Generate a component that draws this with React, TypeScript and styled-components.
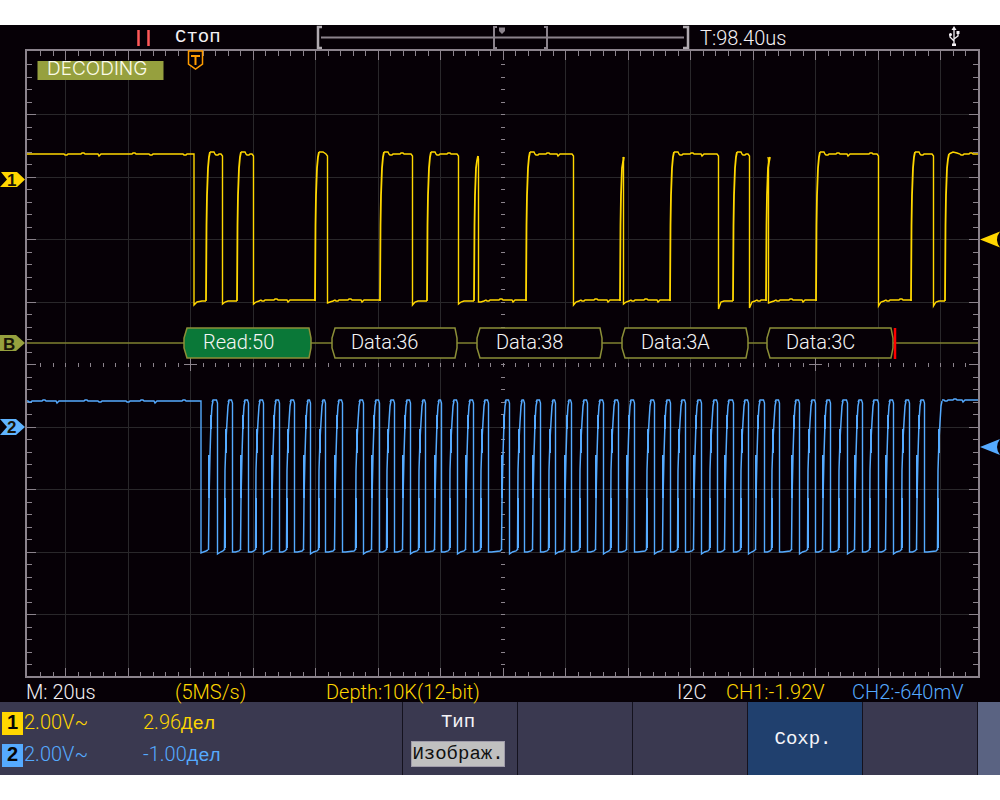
import React from "react";
import styled, { createGlobalStyle } from "styled-components";

const YELLOW = "#ffd600";
const BLUE = "#55aaff";
const OLIVE = "#96a03e";
const FRAME = "#8b838c";
const SANS = 'Roboto, "Liberation Sans", Arial, sans-serif';
const WIDE = 'Inter, "Liberation Sans", Arial, sans-serif';
const BOLD = '"Liberation Sans", Arial, sans-serif';
const MONO = '"Liberation Mono", "Courier New", monospace';

const GlobalStyle = createGlobalStyle`
  *, *::before, *::after { box-sizing: border-box; }
  body {
    margin: 0;
    background: #fff;
    font-family: ${SANS};
    font-size: 20px;
    font-weight: 300;
    line-height: 24px;
  }
`;

const Screen = styled.main`
  margin: 25px 0;
  background: #060006;
  color: #f4f0f4;
`;

const TopBar = styled.header`
  display: flex;
  align-items: flex-start;
  height: 24px;
  white-space: nowrap;
`;

const RunState = styled.div`
  display: flex;
  align-items: flex-start;
  gap: 23px;
  width: 31.6%;
  padding-left: 136px;
  font-family: ${MONO};
  font-size: 19px;
`;

const PauseIcon = styled.svg`
  flex: none;
  width: 16px;
  height: 24px;
`;

const MemoryBar = styled.svg`
  display: block;
  width: 37.4%;
  height: 24px;
`;

const TimeOffset = styled.div`
  flex: 1;
  padding: 1px 0 0 10px;
`;

const UsbIcon = styled.svg`
  flex: none;
  width: 12px;
  height: 24px;
  margin-right: 40px;
`;

const Plot = styled.svg`
  display: block;
  width: 100%;
  height: auto;
  font-family: ${SANS};
  font-size: 20px;
`;

const ModeText = styled.text`
  font-family: ${WIDE};
  font-size: 19px;
  fill: #fbfbe8;
`;

const MarkerText = styled.text`
  font-family: ${BOLD};
  font-size: 17px;
  font-weight: 700;
  fill: #181408;
`;

const StatusRow = styled.div`
  display: grid;
  grid-template-columns: 149fr 151fr 351fr 49fr 126fr 148fr;
  height: 22px;
  padding-left: 26px;
  line-height: 24px;
  white-space: nowrap;
`;

const Reading = styled.span<{ $color?: string }>`
  min-width: 0;
  color: ${(p) => p.$color ?? "inherit"};
`;

const SoftMenu = styled.footer`
  display: grid;
  grid-template-columns: 402fr repeat(5, 115fr) 23fr;
  min-height: 73px;
  background: #3a3950;
`;

const Channels = styled.div`
  display: flex;
  flex-direction: column;
  gap: 11px;
  min-width: 0;
  padding: 10px 0 10px 2px;
  white-space: nowrap;
`;

const ChannelRow = styled.div<{ $color: string }>`
  display: grid;
  grid-template-columns: 21px 120px 1fr;
  height: 21px;
  line-height: 21px;
  color: ${(p) => p.$color};
`;

const ChannelBadge = styled.span<{ $color: string }>`
  background: ${(p) => p.$color};
  color: #060606;
  font-family: ${BOLD};
  font-weight: 700;
  text-align: center;
`;

const Scale = styled.span`
  padding-left: 1px;
`;

const Unit = styled.span`
  font-family: ${MONO};
  font-size: 19px;
`;

const MenuButton = styled.button<{ $bg?: string }>`
  display: flex;
  flex-direction: column;
  align-items: center;
  justify-content: center;
  gap: 7px;
  min-width: 0;
  margin: 0;
  padding: 0 4px 0 0;
  border: 0;
  border-left: 1px solid #14121e;
  background: ${(p) => p.$bg ?? "transparent"};
  color: #f4f4f8;
  font-family: ${MONO};
  font-size: 19px;
  line-height: 24px;
  white-space: nowrap;
`;

const Choice = styled.span`
  border: 1px solid #a09caa;
  background: #c0c0c0;
  color: #101010;
`;

const range = (from: number, to: number) =>
  Array.from({ length: to - from + 1 }, (_, i) => from + i);

/* Channel 1: [rise, fall, undershoot level, top level] */
const sda: number[][] = [
  [206, 222, 304, 152],
  [237, 253, 304, 152],
  [315, 327, 303, 152],
  [380, 412, 305, 152],
  [427, 458, 304, 152],
  [474, 478, 302, 156],
  [526, 573, 305, 152],
  [620, 623, 304, 157],
  [670, 718, 309, 152],
  [733, 749, 308, 152],
  [766, 768, 303, 157],
  [816, 878, 306, 152],
  [911, 933, 306, 152],
];

/* Channel 2: clock edges */
const sclRise = [
  209, 225, 241, 256, 272, 287, 304, 319, 335, 356, 372, 387, 403, 419, 435,
  450, 466, 481, 502, 518, 533, 549, 565, 580, 596, 611, 627, 647, 663, 678,
  694, 710, 725, 741, 756, 772, 792, 808, 823, 839, 855, 870, 886, 902, 917,
];
const sclFall = [
  217, 232, 248, 263, 279, 294, 310, 325, 342, 363, 379, 394, 410, 425, 441,
  457, 473, 488, 509, 524, 540, 555, 571, 587, 603, 618, 634, 654, 670, 685,
  701, 717, 733, 748, 764, 779, 799, 815, 830, 847, 862, 878, 893, 909, 924,
];

/* Small ripples along a level stretch of trace */
const ripple = (x0: number, x1: number, y: number, step: number) => {
  let d = "";
  for (let x = x0, i = 0; x + 4 < x1; x += step, i += 1) {
    const h = [1, -1, 2, 0, -1, 1, 0][i % 7];
    d += `L${x} ${y}L${x + 1} ${y + h}L${x + 3} ${y + (h > 1 ? 0 : h)}L${x + 4} ${y}`;
  }
  return d + `L${x1} ${y}`;
};

const riseSda = (r: number, top: number) =>
  `M${r} 301L${r + 0.5} 225L${r + 1} 195L${r + 2} 168L${r + 3} ${top + 5}L${r + 4} ${top}`;

const sdaLevels = () => {
  let d = `M27 154${ripple(64, 194, 154, 17)}V305L197 302L202 301`;
  sda.forEach(([r, f, low, top], i) => {
    d += `L${r} 301M${Math.min(r + 4, f)} ${top}`;
    if (f - r > 8) d += `L${r + 8} ${top}${ripple(r + 9, f - 1, 154, 11)}L${f + 0.5} 156`;
    else d += `L${f + 0.5} ${top + 3}`;
    const next = i + 1 < sda.length ? sda[i + 1][0] : 945;
    d += `V${low}L${f + 3} ${Math.min(low, 302)}L${f + 6} 301`;
    if (next - f > 16) d += ripple(f + 8, next, 300, 13);
  });
  return d + `L945 301M949 154L953 152L957 153${ripple(960, 978, 154, 9)}`;
};

const riseScl = (r: number, i: number) => {
  const k = i % 2 ? 30 : 0;
  return `M${r - 0.5} 550L${r} ${500 - k}L${r + 1} ${455 - k / 2}L${r + 2} 422L${r + 3} 406L${r + 4} 401`;
};

/* Short bright stretches where the clock edge dwells longest */
const glowScl = (r: number, i: number) =>
  i % 2
    ? `M${r} 498V548M${r + 1} 429V453`
    : `M${r} 455V498M${r + 2} 415V429`;

const sclLevels = () => {
  let d = `M27 401${ripple(28, 200, 401, 14)}H201V553L206 551L208 550`;
  sclRise.forEach((r, i) => {
    const f = sclFall[i] + 0.5;
    const next = sclRise[i + 1] ?? 938;
    d += `M${r + 3} 402L${r + 4} 400H${f - 1}L${f} 403V${i % 3 ? 552 : 554}L${f + 3} 552L${next - 2} 551L${next} 549`;
  });
  return d + `M942 400${ripple(944, 978, 400, 9)}`;
};

const xMajor = range(-7, 7).map((n) => 503 + n * 62.5);
const xMinor = range(-37, 37).map((n) => 503 + n * 12.5);
const yMajor = range(-4, 4).map((n) => 364.5 + n * 62.5);
const yMinor = range(-24, 24).map((n) => 364.5 + n * 12.5);

const gridPath =
  xMajor.filter((x) => x !== 503).map((x) => `M${x} 51V677`).join("") +
  yMajor.filter((y) => y !== 364.5).map((y) => `M27 ${y}H978`).join("");

const tickPath =
  xMinor
    .map((x) => {
      const len = xMajor.includes(x) ? 9 : 5;
      return `M${x} 51v${len}M${x} 677v-${len}M${x} 362.5v4`;
    })
    .join("") +
  yMinor
    .map((y) => {
      const len = yMajor.includes(y) ? 9 : 5;
      return `M27 ${y}h${len}M978 ${y}h-${len}M501 ${y}h4`;
    })
    .join("") +
  "M184 364.5h13M190.5 358v13M809 364.5h13M815.5 358v13";

const frames = [
  { x: 184, end: 311, label: "Read:50", fill: "#0a7838" },
  { x: 332, end: 457, label: "Data:36", fill: "#060006" },
  { x: 477, end: 602, label: "Data:38", fill: "#060006" },
  { x: 622, end: 748, label: "Data:3A", fill: "#060006" },
  { x: 767, end: 893, label: "Data:3C", fill: "#060006" },
];

const Waveforms = () => (
  <Plot viewBox="0 49 1000 631" role="img" aria-label="I2C decoding">
    <g fill="none" shapeRendering="crispEdges">
      <path d={gridPath} stroke="#29272a" />
      <path d={tickPath} stroke={FRAME} />
      <rect x="26" y="50" width="953" height="627" stroke={FRAME} strokeWidth="2" />
    </g>

    <rect x="37.5" y="61" width="126" height="19" fill={OLIVE} />
    <ModeText x="47" y="75">DECODING</ModeText>

    <path d="M188.500 51H202.500V64L195.500 69L188.500 64Z" fill="#060006" stroke="#ff9c00" strokeWidth="1.500" />
    <path d="M191 56H200M195.500 56V65" stroke="#ff9c00" strokeWidth="2" fill="none" />

    <g fill="none" stroke={YELLOW}>
      <path d={sdaLevels()} strokeWidth="1.400" />
      <path
        d={sda.map(([r, , , top]) => riseSda(r, top)).join("") + riseSda(945, 154)}
        strokeWidth="1.800"
      />
    </g>

    <g fill="none" stroke={BLUE}>
      <path d={sclLevels()} strokeWidth="1.400" />
      <path d={[...sclRise, 938].map(riseScl).join("")} strokeWidth="1.500" />
      <path d={[...sclRise, 938].map(glowScl).join("")} strokeWidth="2" />
    </g>

    <path d="M27 343H978" stroke="#7f8030" strokeWidth="1.500" />
    {frames.map(({ x, end, label, fill }) => (
      <g key={label}>
        <path
          d={`M${x + 3} 328H${end - 2}L${end} 338V348L${end - 2} 358H${x + 3}L${x} 348V338Z`}
          fill={fill}
          stroke="#8c8f38"
          strokeWidth="1.500"
        />
        <text x={x + 19} y="349" fill="#f6f6f6">{label}</text>
      </g>
    ))}
    <path d="M895 328V359" stroke="#ff0000" strokeWidth="2.500" />

    <path d="M1 172H17L25 179.500L17 187H0L7 179.500Z" fill={YELLOW} />
    <MarkerText x="7" y="186">1</MarkerText>
    <path d="M0 335H16L25 343L16 351H0Z" fill={OLIVE} />
    <MarkerText x="3" y="350">B</MarkerText>
    <path d="M0 419H16L25 427L16 435H0L7 427Z" fill="#60b4ff" />
    <MarkerText x="7" y="433">2</MarkerText>

    <path d="M980 239.500L1000 231.500Q994 239.500 1000 247.500Z" fill={YELLOW} />
    <path d="M980 447L1000 439Q994 447 1000 455Z" fill={BLUE} />
  </Plot>
);

export default function App() {
  return (
    <>
      <GlobalStyle />
      <Screen>
        <TopBar>
          <RunState>
            <PauseIcon viewBox="0 0 16 24" aria-hidden="true">
              <path d="M2.500 5V21M12.500 5V21" stroke="#ff5858" strokeWidth="2.500" />
            </PauseIcon>
            <span>Стоп</span>
          </RunState>
          <MemoryBar viewBox="0 0 374 24" preserveAspectRatio="none" aria-hidden="true">
            <g fill="none" stroke={FRAME} strokeWidth="2">
              <path d="M5 12.500H368" />
              <path d="M181 2H178V23H181M228 2H231V23H228" />
              <path d="M6 2H2V23H6M367 2H372V23H367" stroke="#b0aab0" strokeWidth="2.500" />
            </g>
            <path d="M183 2.500H189V6L186 9L183 6Z" fill={FRAME} />
          </MemoryBar>
          <TimeOffset>T:98.40us</TimeOffset>
          <UsbIcon viewBox="0 0 12 24" aria-hidden="true">
            <path
              d="M6 3V20M6 16L2 12V9M6 14L10 11V7"
              fill="none"
              stroke="#f4f0f4"
              strokeWidth="1.300"
            />
            <path d="M6 1L8.500 5H3.500ZM8.500 6H11.500V9H8.500ZM4 18.500H8V21H4Z" fill="#f4f0f4" />
            <circle cx="2.500" cy="9.500" r="1.500" fill="#f4f0f4" />
          </UsbIcon>
        </TopBar>

        <Waveforms />

        <StatusRow>
          <Reading>M: 20us</Reading>
          <Reading $color={YELLOW}>(5MS/s)</Reading>
          <Reading $color={YELLOW}>Depth:10K(12-bit)</Reading>
          <Reading>I2C</Reading>
          <Reading $color={YELLOW}>CH1:-1.92V</Reading>
          <Reading $color={BLUE}>CH2:-640mV</Reading>
        </StatusRow>

        <SoftMenu>
          <Channels>
            <ChannelRow $color={YELLOW}>
              <ChannelBadge $color={YELLOW}>1</ChannelBadge>
              <Scale>2.00V~</Scale>
              <span>2.96<Unit>Дел</Unit></span>
            </ChannelRow>
            <ChannelRow $color={BLUE}>
              <ChannelBadge $color={BLUE}>2</ChannelBadge>
              <Scale>2.00V~</Scale>
              <span>-1.00<Unit>Дел</Unit></span>
            </ChannelRow>
          </Channels>
          <MenuButton type="button">
            <span>Тип</span>
            <Choice>Изображ.</Choice>
          </MenuButton>
          <MenuButton type="button" aria-label="F2" />
          <MenuButton type="button" aria-label="F3" />
          <MenuButton type="button" $bg="#20406e">Сохр.</MenuButton>
          <MenuButton type="button" aria-label="F5" />
          <MenuButton type="button" aria-label="F6" $bg="#5a6382" />
        </SoftMenu>
      </Screen>
    </>
  );
}
